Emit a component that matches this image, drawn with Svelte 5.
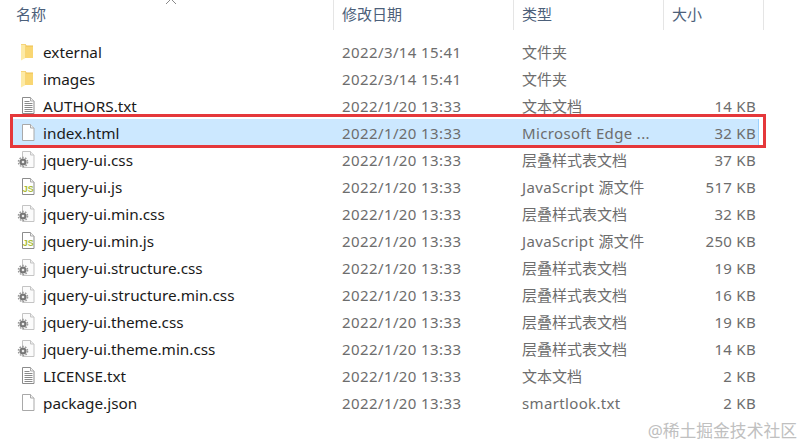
<script>
    const columns = [
        { label: '名称', width: 334 },
        { label: '修改日期', width: 180 },
        { label: '类型', width: 150 },
        { label: '大小', width: 100 }
    ];

    const files = [
        { name: 'external', date: '2022/3/14 15:41', type: '文件夹', size: '', icon: 'folder' },
        { name: 'images', date: '2022/3/14 15:41', type: '文件夹', size: '', icon: 'folder' },
        { name: 'AUTHORS.txt', date: '2022/1/20 13:33', type: '文本文档', size: '14 KB', icon: 'text' },
        { name: 'index.html', date: '2022/1/20 13:33', type: 'Microsoft Edge ...', size: '32 KB', icon: 'blank', selected: true },
        { name: 'jquery-ui.css', date: '2022/1/20 13:33', type: '层叠样式表文档', size: '37 KB', icon: 'css' },
        { name: 'jquery-ui.js', date: '2022/1/20 13:33', type: 'JavaScript 源文件', size: '517 KB', icon: 'js' },
        { name: 'jquery-ui.min.css', date: '2022/1/20 13:33', type: '层叠样式表文档', size: '32 KB', icon: 'css' },
        { name: 'jquery-ui.min.js', date: '2022/1/20 13:33', type: 'JavaScript 源文件', size: '250 KB', icon: 'js' },
        { name: 'jquery-ui.structure.css', date: '2022/1/20 13:33', type: '层叠样式表文档', size: '19 KB', icon: 'css' },
        { name: 'jquery-ui.structure.min.css', date: '2022/1/20 13:33', type: '层叠样式表文档', size: '16 KB', icon: 'css' },
        { name: 'jquery-ui.theme.css', date: '2022/1/20 13:33', type: '层叠样式表文档', size: '19 KB', icon: 'css' },
        { name: 'jquery-ui.theme.min.css', date: '2022/1/20 13:33', type: '层叠样式表文档', size: '14 KB', icon: 'css' },
        { name: 'LICENSE.txt', date: '2022/1/20 13:33', type: '文本文档', size: '2 KB', icon: 'text' },
        { name: 'package.json', date: '2022/1/20 13:33', type: 'smartlook.txt', size: '2 KB', icon: 'blank' }
    ];

    const isLatin = (text) => /[a-z]/i.test(text);
</script>

{#snippet fileIcon(kind)}
    <svg class="icon" width="18" height="18" viewBox="0 0 18 18">
        {#if kind === 'folder'}
            <path d="M4 1h4.500l1 1.500H16V15H4z" fill="#eebf4f" />
            <path d="M4 1.500h4.500V15L4 17.500z" fill="#fdeaa5" />
            <path d="M8.500 3.500H16V15H8.500z" fill="#f9d672" />
        {:else if kind === 'css'}
            <path d="M5.500 0.500h8l3.500 3.500v12.500H5.500z" fill="#fbfbfb" stroke="#c4c4c4" />
            <path d="M13.500 0.500V4H17" fill="#eee" stroke="#c4c4c4" />
            <circle cx="6" cy="11" r="3.600" fill="#777" />
            <circle cx="6" cy="11" r="4.600" fill="none" stroke="#9a9a9a" stroke-width="1.400" stroke-dasharray="1.600 1.300" />
            <circle cx="6" cy="11" r="1.300" fill="#eaeaea" />
        {:else}
            <path d="M5.500 0.500h8l3.500 3.500v12.500H5.500z" fill="#fff" stroke={kind === 'blank' ? '#a9a9a9' : '#8c8c8c'} />
            <path d="M13.500 0.500V4H17" fill="#f2f2f2" stroke="#a9a9a9" />
            {#if kind === 'text'}
                <path d="M7.500 4.500h5M7.500 6.500h8M7.500 8.500h8M7.500 10.500h8M7.500 12.500h8M7.500 14.500h8" stroke="#8a8a8a" fill="none" />
            {:else if kind === 'js'}
                <text x="11.300" y="13.500" class="js-label">JS</text>
            {/if}
        {/if}
    </svg>
{/snippet}

<div class="explorer">
    <div class="header">
        {#each columns as col}
            <div class="col-head" style="width: {col.width}px">{col.label}</div>
        {/each}
        <svg class="sort" width="12" height="6" viewBox="0 0 12 6">
            <path d="M1 6l5-5 5 5" fill="none" stroke="#8a8a8a" />
        </svg>
    </div>

    <div class="rows">
        {#each files as file}
            <div class="row" class:selected={file.selected}>
                <div class="name">
                    {@render fileIcon(file.icon)}
                    <span>{file.name}</span>
                </div>
                <div class="date">{file.date}</div>
                <div class="type" class:latin={isLatin(file.type)}>{file.type}</div>
                <div class="size">{file.size}</div>
            </div>
        {/each}
    </div>

    <div class="watermark">@稀土掘金技术社区</div>
</div>

<style>
    :global(body) {
        background: #fff;
    }

    .explorer {
        position: relative;
        width: 804px;
        height: 447px;
        overflow: hidden;
        background: #fff;
        font-family: "Noto Sans", "Noto Sans CJK SC", sans-serif;
        font-size: 15px;
        color: #1a1a1a;
    }

    .header {
        position: relative;
        display: flex;
        height: 30px;
        color: #4c607a;
    }

    .col-head {
        box-sizing: border-box;
        padding-left: 8px;
        line-height: 28px;
        border-right: 1px solid #e5e5e5;
    }

    .col-head:first-child {
        padding-left: 16px;
    }

    .sort {
        position: absolute;
        left: 165px;
        top: -2px;
    }

    .rows {
        padding: 8px 0 0 13px;
    }

    .row {
        position: relative;
        display: flex;
        align-items: center;
        box-sizing: border-box;
        width: 746px;
        height: 27px;
        color: #6d6d6d;
        white-space: nowrap;
    }

    .row.selected {
        background: #cce8ff;
        border-right: 1px solid #99d1ff;
    }

    /* red annotation box drawn over the screenshot */
    .row.selected::after {
        content: '';
        position: absolute;
        left: -3px;
        right: -8px;
        top: -5px;
        bottom: -2px;
        border: 3px solid #e5383b;
    }

    .name {
        display: flex;
        align-items: center;
        gap: 8px;
        width: 329px;
        padding-left: 4px;
        box-sizing: border-box;
        font-size: 15.300px;
        color: #1a1a1a;
    }

    .date {
        width: 180px;
        letter-spacing: 0.400px;
    }

    .type {
        width: 150px;
    }

    .type.latin {
        letter-spacing: 0.350px;
    }

    .size {
        width: 84px;
        text-align: right;
        letter-spacing: 0.300px;
    }

    .icon {
        flex: none;
    }

    .js-label {
        font-family: "Liberation Sans", sans-serif;
        font-size: 9px;
        font-weight: 700;
        fill: #a9bb35;
        text-anchor: middle;
    }

    .watermark {
        position: absolute;
        right: 7px;
        bottom: 5px;
        font-size: 16.800px;
        color: #c0c0c0;
        line-height: 22px;
    }
</style>
